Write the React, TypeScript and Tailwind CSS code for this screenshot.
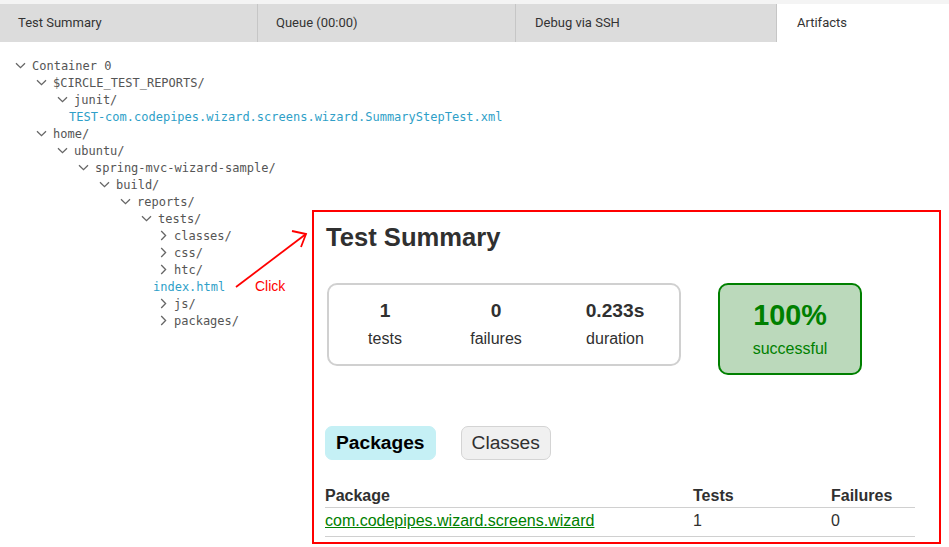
import React from 'react';

type Node = {
  name: string;
  kind: 'open' | 'closed' | 'file';
  children?: Node[];
};

const tree: Node[] = [
  {
    name: 'Container 0',
    kind: 'open',
    children: [
      {
        name: '$CIRCLE_TEST_REPORTS/',
        kind: 'open',
        children: [
          {
            name: 'junit/',
            kind: 'open',
            children: [{ name: 'TEST-com.codepipes.wizard.screens.wizard.SummaryStepTest.xml', kind: 'file' }],
          },
        ],
      },
      {
        name: 'home/',
        kind: 'open',
        children: [
          {
            name: 'ubuntu/',
            kind: 'open',
            children: [
              {
                name: 'spring-mvc-wizard-sample/',
                kind: 'open',
                children: [
                  {
                    name: 'build/',
                    kind: 'open',
                    children: [
                      {
                        name: 'reports/',
                        kind: 'open',
                        children: [
                          {
                            name: 'tests/',
                            kind: 'open',
                            children: [
                              { name: 'classes/', kind: 'closed' },
                              { name: 'css/', kind: 'closed' },
                              { name: 'htc/', kind: 'closed' },
                              { name: 'index.html', kind: 'file' },
                              { name: 'js/', kind: 'closed' },
                              { name: 'packages/', kind: 'closed' },
                            ],
                          },
                        ],
                      },
                    ],
                  },
                ],
              },
            ],
          },
        ],
      },
    ],
  },
];

const tabs = [
  { label: 'Test Summary', w: 'w-[258px] border-r border-[#c6c6c6] bg-[#dcdcdc] pl-[18px]' },
  { label: 'Queue (00:00)', w: 'w-[258px] border-r border-[#c6c6c6] bg-[#dcdcdc] pl-[18px]' },
  { label: 'Debug via SSH', w: 'w-[261px] border-r border-[#c6c6c6] bg-[#dcdcdc] pl-[19px]' },
  { label: 'Artifacts', w: 'flex-1 bg-white pl-[20px]' },
];

function ChevronDown() {
  return (
    <svg width="11" height="7" viewBox="0 0 11 7" className="block">
      <path d="M1 1.2 L5.5 5.6 L10 1.2" fill="none" stroke="#666" strokeWidth="1.3" />
    </svg>
  );
}

function ChevronRight() {
  return (
    <svg width="7" height="11" viewBox="0 0 7 11" className="block">
      <path d="M1.2 1 L5.6 5.5 L1.2 10" fill="none" stroke="#666" strokeWidth="1.3" />
    </svg>
  );
}

function TreeRow({ node }: { node: Node }) {
  if (node.kind === 'file') {
    return (
      <div className="h-[17px] flex items-center ml-[-9px] text-[#2f9fc8] whitespace-nowrap">{node.name}</div>
    );
  }
  return (
    <div>
      <div className="h-[17px] flex items-center whitespace-nowrap text-[#555]">
        {node.kind === 'open' ? (
          <span className="w-[17px] flex items-center">
            <ChevronDown />
          </span>
        ) : (
          <span className="w-[16px] ml-[-4px] pl-[2px] flex items-center">
            <ChevronRight />
          </span>
        )}
        <span>{node.name}</span>
      </div>
      {node.children && (
        <div className="pl-[21px]">
          {node.children.map((c) => (
            <TreeRow key={c.name} node={c} />
          ))}
        </div>
      )}
    </div>
  );
}

export default function App() {
  return (
    <div className="w-[949px] h-[547px] bg-white overflow-hidden relative">
      {/* tab strip */}
      <div className="h-[4px] bg-[#f4f4f4]" />
      <div className="flex h-[38px] font-['Roboto',sans-serif] text-[13px] text-[#333]">
        {tabs.map((t) => (
          <div key={t.label} className={`${t.w} flex items-center`}>
            {t.label}
          </div>
        ))}
      </div>

      {/* artifact tree */}
      <div className="pt-[15px] pl-[15px] font-['DejaVu_Sans_Mono',monospace] text-[12px]">
        {tree.map((n) => (
          <TreeRow key={n.name} node={n} />
        ))}
      </div>

      {/* annotation arrow */}
      <svg className="absolute left-0 top-0 pointer-events-none" width="949" height="547">
        <path d="M236 287 L306 234" stroke="#ff0000" strokeWidth="1.8" fill="none" />
        <path d="M292 231 L306 234 L301 247" stroke="#ff0000" strokeWidth="1.8" fill="none" />
      </svg>
      <div className="absolute left-[255px] top-[277px] text-[14px] leading-[18px] text-[#ff0000] font-['Liberation_Sans',Arial,sans-serif]">
        Click
      </div>

      {/* report screenshot */}
      <div className="absolute left-[312px] top-[210px] w-[629px] h-[334px] border-2 border-[#ff0000] bg-white pl-[12px] pt-[10px] font-['Liberation_Sans',Arial,sans-serif] text-[16px] text-[#303030]">
        <h1 className="text-[25.6px] leading-[30px] font-bold">Test Summary</h1>

        <div className="flex items-start mt-[31px] ml-[1px]">
          <div className="flex border-2 border-[#d0d0d0] rounded-[10px] h-[83px] w-[354px] pl-[1px]">
            <div className="w-[110px] pt-[15px] text-center">
              <div className="text-[19.2px] leading-[22px] font-bold mb-[8px]">1</div>
              <div className="leading-[18px]">tests</div>
            </div>
            <div className="w-[110px] ml-[1px] pt-[15px] text-center">
              <div className="text-[19.2px] leading-[22px] font-bold mb-[8px]">0</div>
              <div className="leading-[18px]">failures</div>
            </div>
            <div className="w-[110px] ml-[9px] pt-[15px] text-center">
              <div className="text-[19.2px] leading-[22px] font-bold mb-[8px]">0.233s</div>
              <div className="leading-[18px]">duration</div>
            </div>
          </div>
          <div className="ml-[37px] w-[144px] h-[92px] border-2 border-[#008000] bg-[#bbd9bb] rounded-[10px] pt-[14px] text-center text-[#008000]">
            <div className="text-[28.8px] leading-[33px] font-bold mb-[8px]">100%</div>
            <div className="leading-[18px]">successful</div>
          </div>
        </div>

        <div className="flex mt-[51px] ml-[-1px]">
          <div className="px-[10px] py-[5px] rounded-[7px] border border-[#c5f0f5] bg-[#c5f0f5] mr-[25px] text-[19.2px] leading-[22px] font-bold text-black">
            Packages
          </div>
          <div className="px-[10px] py-[5px] rounded-[7px] border border-[#d4d4d4] bg-[#f0f0f0] text-[19.2px] leading-[22px]">
            Classes
          </div>
        </div>

        <table className="mt-[27px] ml-[-1px] w-[590px] border-collapse">
          <thead>
            <tr className="border-b border-[#d0d0d0]">
              <th className="text-left font-bold leading-[18px] pb-[2px] w-[368px]">Package</th>
              <th className="text-left font-bold leading-[18px] pb-[2px] w-[138px]">Tests</th>
              <th className="text-left font-bold leading-[18px] pb-[2px]">Failures</th>
            </tr>
          </thead>
          <tbody>
            <tr className="border-b border-[#d0d0d0]">
              <td className="leading-[18px] pt-[4px] pb-[6px] text-[#008000] underline">com.codepipes.wizard.screens.wizard</td>
              <td className="leading-[18px] pt-[4px] pb-[6px]">1</td>
              <td className="leading-[18px] pt-[4px] pb-[6px]">0</td>
            </tr>
          </tbody>
        </table>
      </div>
    </div>
  );
}
